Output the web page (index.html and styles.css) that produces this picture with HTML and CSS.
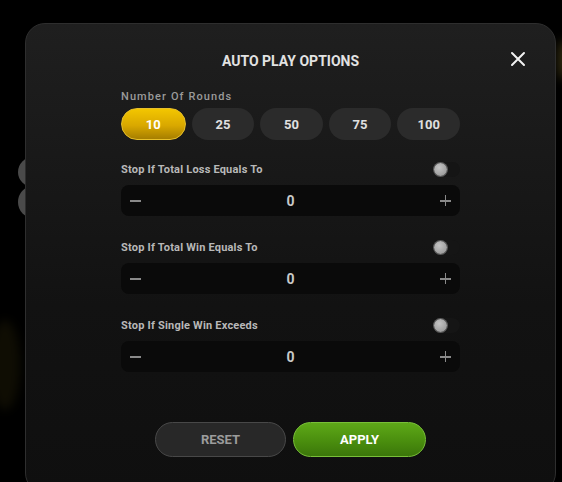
FILE: index.html
```html
<!DOCTYPE html>
<html lang="en">

<head>
    <meta charset="UTF-8">
    <title>Auto Play Options</title>
    <link rel="stylesheet" href="styles.css">
</head>

<body>

    <!-- game buttons peeking out behind the modal -->
    <div class="backdrop">
        <span class="side-btn side-btn-1"></span>
        <span class="side-btn side-btn-2"></span>
        <span class="glow glow-right"></span>
        <span class="glow glow-left"></span>
    </div>

    <div class="modal">

        <div class="modal-header">
            <h1>AUTO PLAY OPTIONS</h1>
            <button class="close-btn" aria-label="Close">
                <svg width="16" height="16" viewBox="0 0 16 16">
                    <path d="M2 2 L14 14 M14 2 L2 14" stroke="#f2f2f2" stroke-width="2" stroke-linecap="round" />
                </svg>
            </button>
        </div>

        <div class="modal-body">

            <!-- Rounds -->
            <p class="rounds-label">Number Of Rounds</p>
            <div class="rounds">
                <button class="round active">10</button>
                <button class="round">25</button>
                <button class="round">50</button>
                <button class="round">75</button>
                <button class="round">100</button>
            </div>

            <!-- Stop conditions -->
            <div class="option">
                <div class="option-head">
                    <span>Stop If Total Loss Equals To</span>
                    <span class="toggle"><span class="knob"></span></span>
                </div>
                <div class="stepper">
                    <span class="minus"></span>
                    <span class="value">0</span>
                    <span class="plus"></span>
                </div>
            </div>

            <div class="option">
                <div class="option-head">
                    <span>Stop If Total Win Equals To</span>
                    <span class="toggle"><span class="knob"></span></span>
                </div>
                <div class="stepper">
                    <span class="minus"></span>
                    <span class="value">0</span>
                    <span class="plus"></span>
                </div>
            </div>

            <div class="option">
                <div class="option-head">
                    <span>Stop If Single Win Exceeds</span>
                    <span class="toggle"><span class="knob"></span></span>
                </div>
                <div class="stepper">
                    <span class="minus"></span>
                    <span class="value">0</span>
                    <span class="plus"></span>
                </div>
            </div>

        </div>

        <div class="modal-footer">
            <button class="btn-reset">RESET</button>
            <button class="btn-apply">APPLY</button>
        </div>

    </div>

</body>

</html>
```

FILE: styles.css
```css
body {
    margin: 0;
    background-color: #000;
    font-family: Roboto, "Liberation Sans", sans-serif;
    width: 562px;
    height: 482px;
    overflow: hidden;
    position: relative;
}

button {
    font-family: inherit;
    cursor: pointer;
}

/* background layer */
.side-btn {
    position: absolute;
    left: 18px;
    width: 30px;
    border-radius: 50%;
    background-color: #4a4a4a;
}

.side-btn-1 {
    top: 157px;
    height: 30px;
}

.side-btn-2 {
    top: 186px;
    height: 32px;
}

.glow {
    position: absolute;
    border-radius: 50%;
    filter: blur(5px);
}

.glow-right {
    right: -6px;
    top: 40px;
    width: 10px;
    height: 40px;
    background-color: rgba(120, 105, 40, 0.45);
}

.glow-left {
    left: -10px;
    top: 320px;
    width: 30px;
    height: 90px;
    background-color: rgba(60, 50, 10, 0.25);
}

/* modal */
.modal {
    position: relative;
    margin: 23px 0 0 25px;
    width: 531px;
    height: 470px;
    box-sizing: border-box;
    border: 1px solid #2e2e2e;
    border-radius: 20px;
    background: linear-gradient(#1f1f1f, #121212 60%, #0f0f0f);
    display: flex;
    flex-direction: column;
    align-items: center;
}

.modal-header {
    width: 100%;
    height: 28px;
    margin-top: 23px;
    position: relative;
    text-align: center;
}

.modal-header h1 {
    margin: 0;
    font-size: 14px;
    line-height: 28px;
    font-weight: 700;
    color: #e2e2e2;
}

.close-btn {
    position: absolute;
    right: 29px;
    top: 4px;
    background: none;
    border: none;
    padding: 0;
    width: 16px;
    height: 16px;
}

.modal-body {
    width: 339px;
    margin-top: 15px;
}

.rounds-label {
    margin: 0;
    font-size: 11px;
    line-height: 14px;
    font-weight: 500;
    letter-spacing: 1.1px;
    color: #9a9a9a;
}

.rounds {
    display: flex;
    gap: 6px;
    margin-top: 4px;
}

.round {
    flex: 1;
    height: 32px;
    border-radius: 16px;
    border: none;
    background-color: #2b2b2b;
    color: #e0e0e0;
    font-size: 13px;
    font-weight: 700;
}

.round.active {
    background: linear-gradient(#f3c600, #d9a800 55%, #a67e00);
    border: 1px solid #e8c02a;
    color: #fff;
}

.option {
    margin-top: 21px;
}

.option + .option {
    margin-top: 23px;
}

.option-head {
    display: flex;
    justify-content: space-between;
    align-items: center;
    height: 16px;
    font-size: 11px;
    font-weight: 700;
    letter-spacing: 0.2px;
    color: #b8b8b8;
}

.toggle {
    width: 27px;
    height: 15px;
    border-radius: 8px;
    background-color: #151515;
    display: flex;
    align-items: center;
    padding-left: 1px;
    box-sizing: border-box;
}

.knob {
    width: 13px;
    height: 13px;
    border-radius: 50%;
    background: radial-gradient(circle at 40% 35%, #c4c4c4, #8e8e8e);
    box-shadow: 0 0 0 1px #5a5a5a;
}

.stepper {
    margin-top: 8px;
    height: 31px;
    border-radius: 8px;
    background-color: #0a0a0a;
    display: flex;
    align-items: center;
    justify-content: space-between;
    padding: 0 9px;
}

.value {
    font-size: 14px;
    font-weight: 700;
    color: #c8c8c8;
}

.minus,
.plus {
    width: 11px;
    height: 11px;
    position: relative;
}

.minus::before,
.plus::before,
.plus::after {
    content: "";
    position: absolute;
    background-color: #8a8a8a;
}

.minus::before,
.plus::before {
    left: 0;
    top: 5px;
    width: 11px;
    height: 2px;
}

.plus::after {
    left: 5px;
    top: 0;
    width: 1.5px;
    height: 11px;
}

.modal-footer {
    display: flex;
    gap: 7px;
    margin-top: 50px;
}

.btn-reset,
.btn-apply {
    height: 35px;
    border-radius: 18px;
    font-size: 13px;
    font-weight: 700;
}

.btn-reset {
    width: 131px;
    background-color: #282828;
    border: 1px solid #484848;
    color: #9c9c9c;
}

.btn-apply {
    width: 133px;
    background: linear-gradient(#5ea818, #4a8e0e 55%, #3b760a);
    border: 1px solid #78bf38;
    color: #fff;
}
```
